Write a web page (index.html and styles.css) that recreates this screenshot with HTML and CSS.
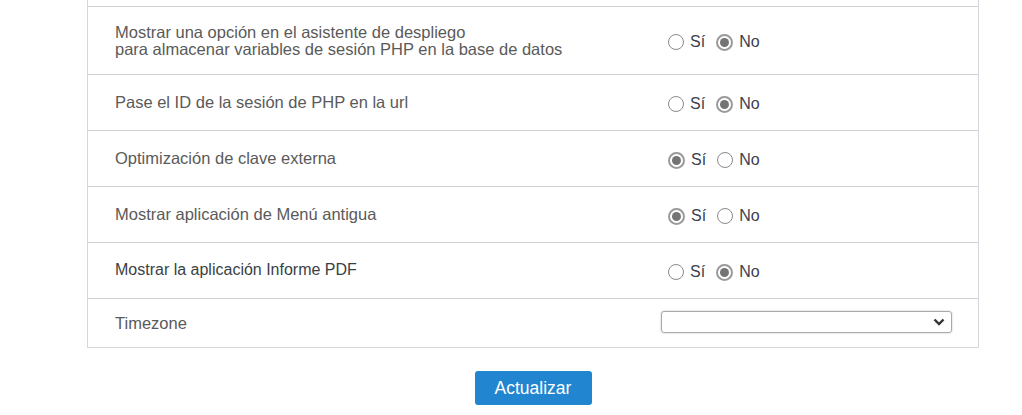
FILE: index.html
```html
<!DOCTYPE html>
<html lang="es">
<head>
<meta charset="utf-8">
<title>Configuración</title>
<link rel="stylesheet" href="styles.css">
</head>
<body>
<div class="panel">
  <div class="stub"></div>
  <div class="row row-tall">
    <div class="label blur">Mostrar una opción en el asistente de despliego<br>para almacenar variables de sesión PHP en la base de datos</div>
    <div class="value">
      <label class="opt"><span class="radio"></span><span>Sí</span></label>
      <label class="opt"><span class="radio on"></span><span>No</span></label>
    </div>
  </div>
  <div class="row">
    <div class="label blur">Pase el ID de la sesión de PHP en la url</div>
    <div class="value">
      <label class="opt"><span class="radio"></span><span>Sí</span></label>
      <label class="opt"><span class="radio on"></span><span>No</span></label>
    </div>
  </div>
  <div class="row">
    <div class="label blur">Optimización de clave externa</div>
    <div class="value">
      <label class="opt"><span class="radio on"></span><span>Sí</span></label>
      <label class="opt"><span class="radio"></span><span>No</span></label>
    </div>
  </div>
  <div class="row">
    <div class="label blur">Mostrar aplicación de Menú antigua</div>
    <div class="value">
      <label class="opt"><span class="radio on"></span><span>Sí</span></label>
      <label class="opt"><span class="radio"></span><span>No</span></label>
    </div>
  </div>
  <div class="row">
    <div class="label sharp">Mostrar la aplicación Informe PDF</div>
    <div class="value">
      <label class="opt"><span class="radio"></span><span>Sí</span></label>
      <label class="opt"><span class="radio on"></span><span>No</span></label>
    </div>
  </div>
  <div class="row row-short">
    <div class="label blur">Timezone</div>
    <div class="value">
      <div class="select">
        <svg class="chev" width="12" height="8" viewBox="0 0 12 8"><path d="M1.5 1.5 L6 6 L10.5 1.5" fill="none" stroke="#333" stroke-width="2.4"/></svg>
      </div>
    </div>
  </div>
</div>
<div class="actions">
  <button class="btn" type="button">Actualizar</button>
</div>
</body>
</html>
```

FILE: styles.css
```css
html, body {
  margin: 0;
  padding: 0;
  background: #ffffff;
}
body {
  font-family: "Liberation Sans", Arial, sans-serif;
  color: #333;
}
.panel {
  margin-left: 87px;
  width: 892px;
  box-sizing: border-box;
  border-left: 1px solid #d3d8dc;
  border-right: 1px solid #d3d8dc;
  border-bottom: 1px solid #d3d8dc;
}
.stub {
  height: 6px;
}
.row {
  display: flex;
  align-items: center;
  height: 56px;
  box-sizing: border-box;
  border-top: 1px solid #cfd3d7;
}
.row-tall {
  height: 68px;
}
.row-short {
  height: 49px;
}
.label {
  width: 573px;
  box-sizing: border-box;
  padding-left: 27px;
  font-size: 16px;
  line-height: 17px;
}
.label.blur {
  color: #5a5a5a;
  font-size: 16.5px;
}
.row-tall .label {
  margin-top: 0;
}
.label.sharp {
  color: #3b3f45;
  margin-top: -3px;
}
.value {
  display: flex;
  align-items: center;
  padding-top: 3px;
}
.opt {
  display: inline-flex;
  align-items: center;
  font-size: 16px;
  color: #3b4150;
  margin-left: 7px;
  margin-right: 4px;
}
.opt + .opt {
  margin-left: 7px;
}
.radio {
  width: 14px;
  height: 14px;
  border: 1.5px solid #8a8a8a;
  border-radius: 50%;
  margin-right: 6px;
  position: relative;
  background: #fff;
}
.radio.on {
  border-width: 2px;
  width: 13px;
  height: 13px;
  border-color: #9a9a9a;
}
.radio.on::after {
  content: "";
  position: absolute;
  left: 2px;
  top: 2px;
  width: 9px;
  height: 9px;
  border-radius: 50%;
  background: #747474;
}
.row-short .value {
  padding-top: 0;
}
.select {
  width: 291px;
  height: 22px;
  box-sizing: border-box;
  border: 1px solid #a9a9a9;
  border-radius: 3px;
  box-shadow: 0 0 2px rgba(0,0,0,0.25);
  display: flex;
  align-items: center;
  justify-content: flex-end;
  padding-right: 6px;
  margin-top: -2px;
}
.chev {
  display: block;
}
.actions {
  display: flex;
  justify-content: center;
  width: 892px;
  margin-left: 87px;
  margin-top: 23px;
}
.btn {
  width: 117px;
  height: 34px;
  border: none;
  border-radius: 3px;
  background: #2185d0;
  color: #fff;
  font-family: "Liberation Sans", Arial, sans-serif;
  font-size: 17.5px;
  padding: 0;
}
```
